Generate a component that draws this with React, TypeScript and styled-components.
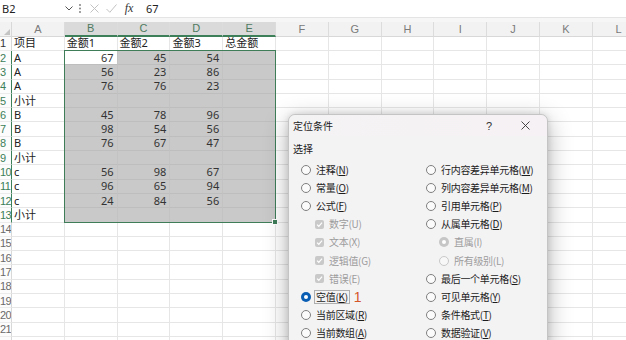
import React from 'react';
import styled, { createGlobalStyle, css } from 'styled-components';

const GlobalStyle = createGlobalStyle`
  html, body { margin: 0; padding: 0; background: #fff; overflow: hidden; }
  body { font-family: "Noto Sans", "Noto Sans CJK SC", sans-serif; }
  * { box-sizing: border-box; }
`;

const Page = styled.div`
  position: relative;
  width: 626px;
  height: 340px;
  overflow: hidden;
  background: #fff;
`;

const FormulaBar = styled.div`
  display: flex;
  align-items: center;
  height: 18px;
  background: #fff;
  border-bottom: 1px solid #e4e4e4;
  font-size: 11px;
  color: #222;
`;

const NameBox = styled.div`
  width: 64px;
  padding-left: 2px;
  line-height: 17px;
`;

const BarIcon = styled.span<{ $w: number }>`
  display: inline-flex;
  align-items: center;
  justify-content: center;
  width: ${(p) => p.$w}px;
  height: 17px;
`;

const Fx = styled.span`
  font-family: "Liberation Serif", serif;
  font-style: italic;
  font-size: 12px;
  color: #333;
  width: 18px;
  text-align: center;
`;

const FormulaInput = styled.div`
  flex: 1;
  padding-left: 8px;
  line-height: 17px;
`;

const Band = styled.div`
  height: 4px;
  background: #f6f6f6;
`;

const Sheet = styled.div`
  display: grid;
  grid-template-columns: 12px repeat(12, 52.8px);
  grid-template-rows: 14.7px repeat(22, 14.3px);
  font-size: 11px;
  color: #222;
`;

const Placed = css<{ $r: number; $c: number }>`
  grid-row: ${(p) => p.$r};
  grid-column: ${(p) => p.$c};
`;

const Corner = styled.div`
  grid-row: 1;
  grid-column: 1;
  background: #f2f2f2;
  border-bottom: 1px solid #d8d8d8;
  border-right: 1px solid #d8d8d8;
  position: relative;
  &::after {
    content: '';
    position: absolute;
    right: 1px;
    bottom: 1px;
    border-left: 6px solid transparent;
    border-bottom: 6px solid #c4c4c4;
  }
`;

const ColHead = styled.div<{ $sel?: boolean; $r: number; $c: number }>`
  ${Placed}
  display: flex;
  align-items: center;
  justify-content: center;
  background: ${(p) => (p.$sel ? '#dadada' : '#f2f2f2')};
  border-right: 1px solid #dcdcdc;
  border-bottom: ${(p) => (p.$sel ? '2px solid #3c7f59' : '1px solid #d8d8d8')};
  color: ${(p) => (p.$sel ? '#4f7a61' : '#7a7a7a')};
  font-family: "Liberation Sans", sans-serif;
  font-size: 11px;
`;

const RowHead = styled.div<{ $sel?: boolean; $dark?: boolean; $r: number; $c: number }>`
  ${Placed}
  display: flex;
  align-items: center;
  justify-content: flex-start;
  background: #fcfcfc;
  border-right: 1px solid ${(p) => (p.$sel ? '#3c7f59' : '#d8d8d8')};
  border-bottom: 1px solid #ececec;
  color: ${(p) => (p.$sel ? '#3c7f59' : p.$dark ? '#333' : '#6a6a6a')};
  font-family: "Liberation Sans", sans-serif;
  font-size: 11px;
  letter-spacing: -0.6px;
  white-space: nowrap;
  overflow: hidden;
`;

const Cell = styled.div<{ $sel?: boolean; $active?: boolean; $num?: boolean; $r: number; $c: number }>`
  ${Placed}
  display: flex;
  align-items: center;
  justify-content: ${(p) => (p.$num ? 'flex-end' : 'flex-start')};
  padding: 0 3px 0 2px;
  border-right: 1px solid #e6e6e6;
  border-bottom: 1px solid #e6e6e6;
  white-space: nowrap;
  line-height: 14px;
  ${(p) =>
    p.$sel &&
    css`
      background: #c9c9c9;
      border-right-color: #c3c3c3;
      border-bottom-color: #bebebe;
      color: #333;
    `}
  ${(p) =>
    p.$active &&
    css`
      background: #fff;
    `}
`;

const SelectionFrame = styled.div`
  grid-column: 3 / 7;
  grid-row: 3 / 15;
  border: 1.5px solid #3f7d59;
  margin: -1px 0 0 -1px;
  position: relative;
  pointer-events: none;
  &::after {
    content: '';
    position: absolute;
    right: -3px;
    bottom: -3px;
    width: 4px;
    height: 4px;
    background: #3f7d59;
    border: 1px solid #fff;
  }
`;

/* Dialog */
const Dialog = styled.div`
  position: absolute;
  left: 288px;
  top: 114px;
  width: 260px;
  height: 240px;
  background: #f4f3f4;
  border: 1px solid #c4c4c4;
  border-radius: 7px;
  box-shadow: 0 6px 24px rgba(0, 0, 0, 0.3), 0 0 6px rgba(0, 0, 0, 0.12);
  display: flex;
  flex-direction: column;
  font-family: "Noto Sans CJK SC", "Noto Sans", sans-serif;
  font-size: 10px;
  color: #1c1c1c;
`;

const TitleBar = styled.div`
  display: flex;
  align-items: center;
  height: 21px;
  padding-left: 4px;
  background: linear-gradient(90deg, #f4f3f4 0%, #f6f1f4 100%);
  border-radius: 7px 7px 0 0;
`;

const Title = styled.div`
  flex: 1;
`;

const TitleBtn = styled.div<{ $w: number }>`
  width: ${(p) => p.$w}px;
  font-family: "Liberation Sans", sans-serif;
  font-size: 11px;
  color: #333;
  display: flex;
  justify-content: center;
  align-items: center;
`;

const Section = styled.div`
  padding: 3px 0 0 4px;
  height: 25px;
  line-height: 20px;
`;

const Options = styled.div`
  display: grid;
  grid-template-columns: 125px 1fr;
  grid-auto-rows: 18.1px;
  padding-left: 12px;
`;

const Option = styled.div<{ $indent?: number; $disabled?: boolean }>`
  display: flex;
  align-items: center;
  padding-left: ${(p) => p.$indent || 0}px;
  color: ${(p) => (p.$disabled ? '#9c9c9c' : '#1c1c1c')};
  white-space: nowrap;
  letter-spacing: -0.3px;
`;

const Radio = styled.span<{ $checked?: boolean; $disabled?: boolean }>`
  width: 10px;
  height: 10px;
  border-radius: 50%;
  margin-right: 3px;
  flex-shrink: 0;
  border: 1px solid #7f7f7f;
  background: #fbfbfb;
  position: relative;
  ${(p) =>
    p.$disabled &&
    css`
      border-color: #c8c8c8;
      background: #f7f7f7;
    `}
  ${(p) =>
    p.$checked &&
    css`
      border: none;
      background: ${p.$disabled ? '#c6c6c6' : '#0a5fb4'};
      &::after {
        content: '';
        position: absolute;
        left: 3px;
        top: 3px;
        width: 4px;
        height: 4px;
        border-radius: 50%;
        background: #fff;
      }
    `}
`;

const Check = styled.span`
  width: 9px;
  height: 9px;
  border-radius: 2px;
  background: #c9c9c9;
  margin-right: 3px;
  flex-shrink: 0;
  display: inline-flex;
  align-items: center;
  justify-content: center;
`;

const Label = styled.span<{ $focus?: boolean }>`
  padding: 0 1px;
  border: 1px solid ${(p) => (p.$focus ? 'rgba(0,0,0,0.28)' : 'transparent')};
  line-height: 12px;
  u { text-decoration: underline; text-underline-offset: 1px; }
`;

const Marker = styled.span`
  color: #d4572a;
  font-family: "Liberation Sans", sans-serif;
  font-size: 14px;
  margin-left: 4px;
`;

type Opt = {
  text: string;
  key: string;
  kind: 'radio' | 'check' | 'subradio';
  checked?: boolean;
  disabled?: boolean;
  marker?: string;
};

const leftOpts: Opt[] = [
  { text: '注释', key: 'N', kind: 'radio' },
  { text: '常量', key: 'O', kind: 'radio' },
  { text: '公式', key: 'F', kind: 'radio' },
  { text: '数字', key: 'U', kind: 'check', disabled: true },
  { text: '文本', key: 'X', kind: 'check', disabled: true },
  { text: '逻辑值', key: 'G', kind: 'check', disabled: true },
  { text: '错误', key: 'E', kind: 'check', disabled: true },
  { text: '空值', key: 'K', kind: 'radio', checked: true, marker: '1' },
  { text: '当前区域', key: 'R', kind: 'radio' },
  { text: '当前数组', key: 'A', kind: 'radio' },
];

const rightOpts: Opt[] = [
  { text: '行内容差异单元格', key: 'W', kind: 'radio' },
  { text: '列内容差异单元格', key: 'M', kind: 'radio' },
  { text: '引用单元格', key: 'P', kind: 'radio' },
  { text: '从属单元格', key: 'D', kind: 'radio' },
  { text: '直属', key: 'I', kind: 'subradio', checked: true, disabled: true },
  { text: '所有级别', key: 'L', kind: 'subradio', disabled: true },
  { text: '最后一个单元格', key: 'S', kind: 'radio' },
  { text: '可见单元格', key: 'Y', kind: 'radio' },
  { text: '条件格式', key: 'T', kind: 'radio' },
  { text: '数据验证', key: 'V', kind: 'radio' },
];

const OptionItem: React.FC<{ o: Opt; right?: boolean }> = ({ o, right }) => {
  const indent = o.kind === 'radio' ? 0 : right ? 13 : 14;
  return (
    <Option $indent={indent} $disabled={o.disabled}>
      {o.kind === 'check' ? (
        <Check>
          <svg width="7" height="7" viewBox="0 0 7 7">
            <path d="M1 3.6 L2.8 5.3 L6 1.6" stroke="#fff" strokeWidth="1.2" fill="none" />
          </svg>
        </Check>
      ) : (
        <Radio $checked={o.checked} $disabled={o.disabled} />
      )}
      <Label $focus={!!o.marker}>
        {o.text}
        {o.disabled ? `(${o.key})` : <>(<u>{o.key}</u>)</>}
      </Label>
      {o.marker && <Marker>{o.marker}</Marker>}
    </Option>
  );
};

const cols = ['A', 'B', 'C', 'D', 'E', 'F', 'G', 'H', 'I', 'J', 'K', 'L'];

const data: (string | number)[][] = [
  ['项目', '金额1', '金额2', '金额3', '总金额'],
  ['A', 67, 45, 54],
  ['A', 56, 23, 86],
  ['A', 76, 76, 23],
  ['小计'],
  ['B', 45, 78, 96],
  ['B', 98, 54, 56],
  ['B', 76, 67, 47],
  ['小计'],
  ['c', 56, 98, 67],
  ['c', 96, 65, 94],
  ['c', 24, 84, 56],
  ['小计'],
];

const ROWS = 22;

export default function App() {
  const rows = Array.from({ length: ROWS }, (_, i) => i + 1);
  return (
    <Page>
      <GlobalStyle />
      <FormulaBar>
        <NameBox>B2</NameBox>
        <BarIcon $w={10}>
          <svg width="8" height="5" viewBox="0 0 8 5">
            <path d="M0.5 0.5 L4 4 L7.5 0.5" stroke="#555" strokeWidth="1" fill="none" />
          </svg>
        </BarIcon>
        <BarIcon $w={12}>
          <svg width="2" height="9" viewBox="0 0 2 9">
            <circle cx="1" cy="1" r="0.9" fill="#777" />
            <circle cx="1" cy="4.5" r="0.9" fill="#777" />
            <circle cx="1" cy="8" r="0.9" fill="#777" />
          </svg>
        </BarIcon>
        <BarIcon $w={16}>
          <svg width="9" height="9" viewBox="0 0 9 9">
            <path d="M0.5 0.5 L8.5 8.5 M8.5 0.5 L0.5 8.5" stroke="#c2c2c2" strokeWidth="1" />
          </svg>
        </BarIcon>
        <BarIcon $w={18}>
          <svg width="11" height="9" viewBox="0 0 11 9">
            <path d="M0.5 5 L3.8 8.3 L10.5 0.5" stroke="#c2c2c2" strokeWidth="1" fill="none" />
          </svg>
        </BarIcon>
        <Fx>fx</Fx>
        <FormulaInput>67</FormulaInput>
      </FormulaBar>
      <Band />
      <Sheet>
        <Corner />
        {cols.map((c, i) => (
          <ColHead key={c} $r={1} $c={i + 2} $sel={i >= 1 && i <= 4}>
            {c}
          </ColHead>
        ))}
        {rows.map((r) => (
          <React.Fragment key={r}>
            <RowHead $r={r + 1} $c={1} $sel={r >= 2 && r <= 13} $dark={r === 1}>
              {r}
            </RowHead>
            {cols.map((c, ci) => {
              const v = data[r - 1]?.[ci];
              const sel = r >= 2 && r <= 13 && ci >= 1 && ci <= 4;
              const active = r === 2 && ci === 1;
              return (
                <Cell
                  key={c}
                  $r={r + 1}
                  $c={ci + 2}
                  $sel={sel}
                  $active={active}
                  $num={typeof v === 'number'}
                >
                  {v ?? ''}
                </Cell>
              );
            })}
          </React.Fragment>
        ))}
        <SelectionFrame />
      </Sheet>
      <Dialog>
        <TitleBar>
          <Title>定位条件</Title>
          <TitleBtn $w={28}>?</TitleBtn>
          <TitleBtn $w={44}>
            <svg width="9" height="9" viewBox="0 0 9 9">
              <path d="M0.5 0.5 L8.5 8.5 M8.5 0.5 L0.5 8.5" stroke="#333" strokeWidth="0.9" />
            </svg>
          </TitleBtn>
        </TitleBar>
        <Section>选择</Section>
        <Options>
          {leftOpts.map((o, i) => (
            <React.Fragment key={i}>
              <OptionItem o={o} />
              <OptionItem o={rightOpts[i]} right />
            </React.Fragment>
          ))}
        </Options>
      </Dialog>
    </Page>
  );
}
